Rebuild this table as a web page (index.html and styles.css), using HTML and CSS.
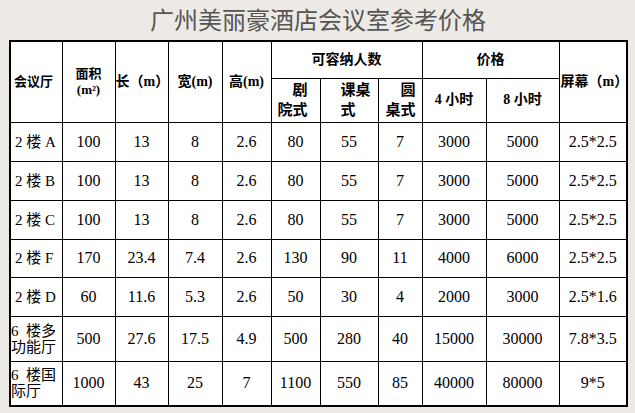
FILE: index.html
```html
<!DOCTYPE html>
<html lang="zh-CN">
<head>
<meta charset="utf-8">
<title>广州美丽豪酒店会议室参考价格</title>
<link rel="stylesheet" href="styles.css">
</head>
<body>
<div class="title">广州美丽豪酒店会议室参考价格</div>
<table class="grid">
<colgroup>
<col class="w52"><col class="w53"><col class="w53"><col class="w54"><col class="w49"><col class="w49"><col class="w58"><col class="w44"><col class="w64"><col class="w73"><col class="w68">
</colgroup>
<thead>
<tr class="hr1">
<th rowspan="2" class="hall">会议厅</th>
<th rowspan="2" class="area">面积<br>(m²)</th>
<th rowspan="2">长（m）</th>
<th rowspan="2">宽(m)</th>
<th rowspan="2">高(m)</th>
<th colspan="3">可容纳人数</th>
<th colspan="2">价格</th>
<th rowspan="2" class="screen">屏幕（m）</th>
</tr>
<tr class="hr2">
<th class="sub theater">剧<br>院式</th>
<th class="sub desk">课桌<br>式</th>
<th class="sub round">圆<br>桌式</th>
<th>4 小时</th>
<th>8 小时</th>
</tr>
</thead>
<tbody>
<tr class="row"><td class="name">2 楼 A</td><td>100</td><td>13</td><td>8</td><td>2.6</td><td>80</td><td>55</td><td>7</td><td>3000</td><td>5000</td><td>2.5*2.5</td></tr>
<tr class="row"><td class="name">2 楼 B</td><td>100</td><td>13</td><td>8</td><td>2.6</td><td>80</td><td>55</td><td>7</td><td>3000</td><td>5000</td><td>2.5*2.5</td></tr>
<tr class="row"><td class="name">2 楼 C</td><td>100</td><td>13</td><td>8</td><td>2.6</td><td>80</td><td>55</td><td>7</td><td>3000</td><td>5000</td><td>2.5*2.5</td></tr>
<tr class="row row-f"><td class="name">2 楼 F</td><td>170</td><td>23.4</td><td>7.4</td><td>2.6</td><td>130</td><td>90</td><td>11</td><td>4000</td><td>6000</td><td>2.5*2.5</td></tr>
<tr class="row"><td class="name">2 楼 D</td><td>60</td><td>11.6</td><td>5.3</td><td>2.6</td><td>50</td><td>30</td><td>4</td><td>2000</td><td>3000</td><td>2.5*1.6</td></tr>
<tr class="row-tall"><td class="name two">6&ensp;楼多<br>功能厅</td><td>500</td><td>27.6</td><td>17.5</td><td>4.9</td><td>500</td><td>280</td><td>40</td><td>15000</td><td>30000</td><td>7.8*3.5</td></tr>
<tr class="row-tall"><td class="name two">6&ensp;楼国<br>际厅</td><td>1000</td><td>43</td><td>25</td><td>7</td><td>1100</td><td>550</td><td>85</td><td>40000</td><td>80000</td><td>9*5</td></tr>
</tbody>
</table>
</body>
</html>
```
FILE: styles.css
```css
html, body {
  margin: 0;
  padding: 0;
  background: #edeae5;
}
body {
  width: 635px;
  height: 413px;
  overflow: hidden;
  font-family: "Liberation Serif", "Noto Sans CJK SC", serif;
  color: #000;
}
.title {
  height: 40px;
  line-height: 38px;
  text-align: center;
  font-family: "Noto Sans CJK SC", "Noto Sans", sans-serif;
  font-size: 24px;
  color: #555;
  padding-left: 1px;
}
.grid {
  margin-left: 9px;
  border-collapse: collapse;
  table-layout: fixed;
  width: 617px;
  background: #fff;
  border: 2px solid #000;
}
.w52 { width: 52px; }
.w53 { width: 53px; }
.w54 { width: 54px; }
.w49 { width: 49px; }
.w58 { width: 58px; }
.w44 { width: 44px; }
.w64 { width: 64px; }
.w73 { width: 73px; }
.w68 { width: 68px; }
th, td {
  border: 1px solid #000;
  padding: 0;
  text-align: center;
  vertical-align: middle;
  overflow: hidden;
  white-space: nowrap;
}
th {
  font-weight: 700;
  font-size: 14px;
  line-height: 16px;
}
.hall, .area {
  font-size: 13px;
}
.hall {
  text-align: left;
  padding-left: 3px;
}
.screen {
  text-align: left;
  padding-left: 1px;
}
.hr1 { height: 37px; }
.hr2 { height: 44px; }
.sub {
  font-size: 15px;
  line-height: 20px;
}
.theater {
  text-align: right;
  padding-right: 12px;
}
.desk {
  text-align: left;
  padding-left: 20px;
}
.round {
  text-align: right;
  padding-right: 6px;
}
td {
  font-size: 16px;
  line-height: 18px;
}
.row { height: 39px; }
.row-f { height: 38px; }
.row-tall { height: 45px; }
.name {
  text-align: left;
  padding-left: 4px;
  font-size: 15px;
}
.name.two {
  padding-left: 0;
  line-height: 16px;
}
```
